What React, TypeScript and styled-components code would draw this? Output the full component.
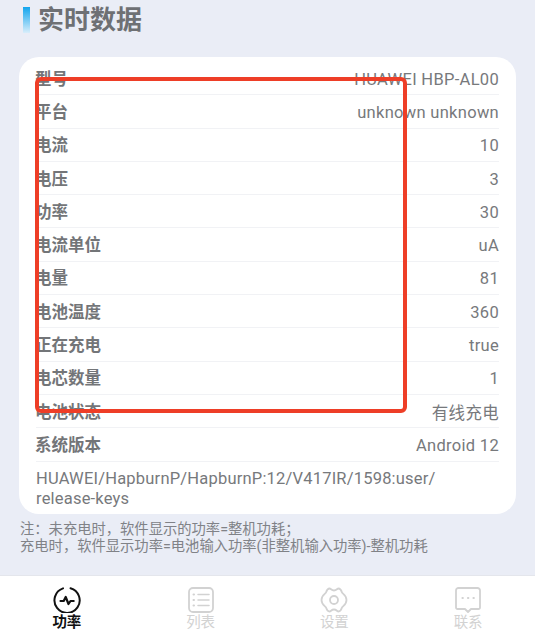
import React from 'react';
import styled, { createGlobalStyle } from 'styled-components';

const GlobalStyle = createGlobalStyle`
  html, body {
    margin: 0;
    padding: 0;
    background: #eaedf6;
    font-family: Roboto, "Noto Sans CJK SC", sans-serif;
  }
`;

const rows = [
  ['型号', 'HUAWEI HBP-AL00'],
  ['平台', 'unknown unknown'],
  ['电流', '10'],
  ['电压', '3'],
  ['功率', '30'],
  ['电流单位', 'uA'],
  ['电量', '81'],
  ['电池温度', '360'],
  ['正在充电', 'true'],
  ['电芯数量', '1'],
  ['电池状态', '有线充电'],
  ['系统版本', 'Android 12'],
];

const PowerIcon = () => (
  <svg width="28" height="26" viewBox="0 0 28 26" fill="none" stroke="currentColor" strokeLinecap="round" strokeLinejoin="round">
    <path d="M17.5 1.2A12.6 12.6 0 1 1 10 1.4" strokeWidth="2" />
    <path d="M7.5 14h3.2l2-4 2.8 7 2-3h3.2" strokeWidth="2.2" />
  </svg>
);

const ListIcon = () => (
  <svg width="26" height="26" viewBox="0 0 26 26" fill="none" stroke="currentColor" strokeLinecap="round">
    <rect x="1" y="1" width="24" height="24" rx="4" strokeWidth="1.8" />
    <path d="M10 7.5h11M10 13h11M10 18.5h11" strokeWidth="1.5" />
    <path d="M5.5 7.5h.5M5.5 13h.5M5.5 18.5h.5" strokeWidth="2" />
  </svg>
);

const SettingsIcon = () => (
  <svg width="28" height="26" viewBox="0 0 28 26" fill="none" stroke="currentColor" strokeWidth="1.8" strokeLinejoin="round">
    <path d="M9.5 1.5c1.5 0 1.8 2 4.5 2s3-2 4.5-2c2 0 3 2.500 3.500 4 .5 1.500 4.500 2.500 4.500 7.500s-4 6-4.500 7.500c-.5 1.500-1.500 4-3.500 4-1.500 0-1.800-2-4.500-2s-3 2-4.500 2c-2 0-3-2.500-3.500-4C5.500 19 1.500 18 1.500 13S5.500 7 6 5.500c.5-1.500 1.500-4 3.500-4Z" />
    <circle cx="14" cy="13" r="4" />
  </svg>
);

const ChatIcon = () => (
  <svg width="26" height="26" viewBox="0 0 26 26" fill="none" stroke="currentColor" strokeLinejoin="round" strokeLinecap="round">
    <path d="M3.5 1h19A2.5 2.5 0 0 1 25 3.5v17a1.5 1.5 0 0 1-1.5 1.5H16l-3 3-3-3H2.5A1.5 1.5 0 0 1 1 20.5v-17A2.5 2.5 0 0 1 3.5 1Z" strokeWidth="1.8" />
    <path d="M7.5 11h.3M13 11h.3M18.5 11h.3" strokeWidth="2.2" />
  </svg>
);

const tabs = [
  { label: '功率', icon: <PowerIcon />, active: true },
  { label: '列表', icon: <ListIcon />, active: false },
  { label: '设置', icon: <SettingsIcon />, active: false },
  { label: '联系', icon: <ChatIcon />, active: false },
];

const App = () => (
  <Page>
    <GlobalStyle />
    <Header>
      <TitleMark />
      <Title>实时数据</Title>
    </Header>
    <Card>
      {rows.map(([name, value]) => (
        <Row key={name}>
          <Name>{name}</Name>
          <Value>{value}</Value>
        </Row>
      ))}
      <Fingerprint>
        HUAWEI/HapburnP/HapburnP:12/V417IR/1598:user/
        <br />
        release-keys
      </Fingerprint>
    </Card>
    <Note>
      注：未充电时，软件显示的功率=整机功耗；
      <br />
      充电时，软件显示功率=电池输入功率(非整机输入功率)-整机功耗
    </Note>
    <TabBar>
      {tabs.map((tab) => (
        <Tab key={tab.label} $active={tab.active}>
          {tab.icon}
          <TabLabel $active={tab.active}>{tab.label}</TabLabel>
        </Tab>
      ))}
    </TabBar>
    <Highlight />
  </Page>
);

export default App;

const Page = styled.div`
  position: relative;
  display: flex;
  flex-direction: column;
  width: 535px;
  height: 642px;
  overflow: hidden;
  background: #eaedf6;
`;

const Header = styled.div`
  display: flex;
  align-items: center;
  gap: 8px;
  height: 40px;
  padding-left: 23px;
  margin-bottom: 17px;
`;

const TitleMark = styled.div`
  width: 7px;
  height: 26px;
  background: linear-gradient(180deg, #12a5ee 0%, #d9eefb 100%);
`;

const Title = styled.h1`
  margin: 0;
  font-size: 26px;
  line-height: 40px;
  font-weight: 700;
  color: #6e7074;
`;

const Card = styled.div`
  margin: 0 19px;
  padding: 5px 17px 5px;
  background: #fff;
  border-radius: 20px;
`;

const Row = styled.div`
  display: flex;
  align-items: center;
  justify-content: space-between;
  box-sizing: border-box;
  height: 33.3px;
  border-bottom: 1px solid #f1f2f5;
`;

const Name = styled.span`
  margin-left: -1px;
  padding-bottom: 1px;
  font-size: 16.5px;
  font-weight: 700;
  color: #737578;
`;

const Value = styled.span`
  padding-top: 2px;
  font-size: 16.5px;
  color: #77797c;
  letter-spacing: 0.3px;
`;

const Fingerprint = styled.div`
  padding-top: 7px;
  font-size: 16.5px;
  line-height: 20px;
  color: #77797c;
  letter-spacing: 0.2px;
`;

const Note = styled.div`
  padding: 7px 0 0 20px;
  height: 54px;
  font-size: 14.3px;
  line-height: 17px;
  color: #808287;
`;

const TabBar = styled.div`
  flex: 1;
  display: grid;
  grid-template-columns: repeat(4, 1fr);
  padding-top: 11px;
  background: #fff;
  border-top: 1px solid #e4e6ec;
`;

const Tab = styled.div<{ $active: boolean }>`
  display: flex;
  flex-direction: column;
  align-items: center;
  color: ${(p) => (p.$active ? '#111' : '#d2d2d2')};
`;

const TabLabel = styled.span<{ $active: boolean }>`
  margin-top: 1px;
  font-size: 14.5px;
  line-height: 18px;
  font-weight: ${(p) => (p.$active ? 700 : 400)};
`;

const Highlight = styled.div`
  position: absolute;
  left: 35px;
  top: 77px;
  width: 372px;
  height: 336px;
  box-sizing: border-box;
  border: 4px solid #ee3e27;
  border-radius: 6px;
  pointer-events: none;
`;
